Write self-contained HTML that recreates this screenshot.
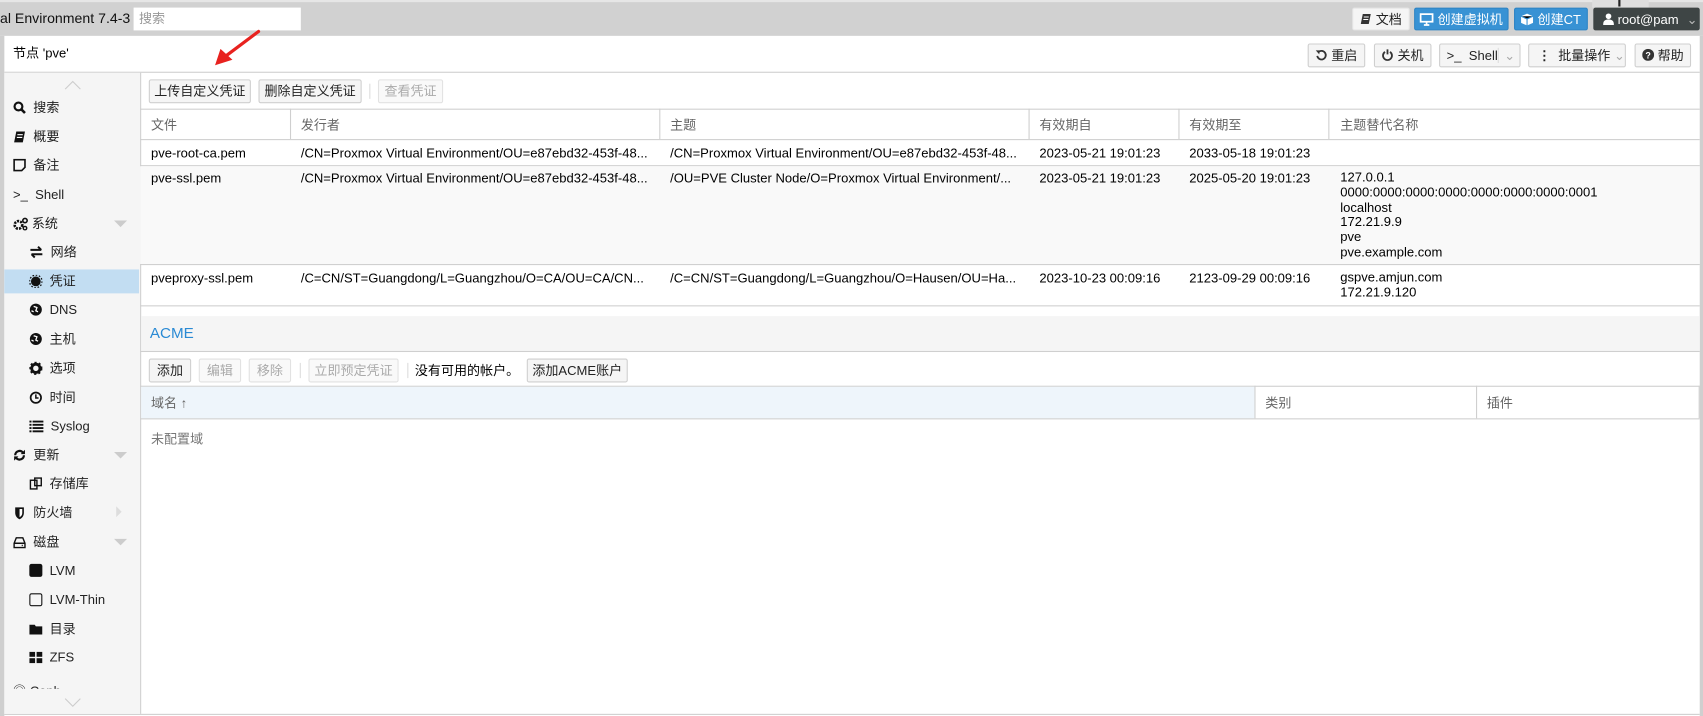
<!DOCTYPE html>
<html><head><meta charset="utf-8"><style>
*{box-sizing:border-box;margin:0;padding:0}
html,body{width:1703px;height:716px;overflow:hidden;background:#fff}
#w{position:absolute;left:0;top:0;width:1568px;height:659px;transform:scale(1.0861,1.0865);transform-origin:0 0;font-family:"Liberation Sans","Noto Sans CJK SC",sans-serif;font-size:12px;color:#000}
.a{position:absolute}
.t{position:absolute;white-space:nowrap;line-height:14px}
.btn{position:absolute;height:22px;border:1px solid #cfcfcf;border-radius:2px;background:#f5f5f5;line-height:20px;font-size:12px;color:#222;text-align:center;white-space:nowrap}
.dis{color:#aaa;border-color:#e2e2e2;background:#f9f9f9}
.hl{position:absolute;height:1px;background:#cfcfcf}
.vl{position:absolute;width:1px;background:#cfcfcf}
.hd{color:#666}
.si{position:absolute;height:16px;line-height:16px;white-space:nowrap;color:#222}
.ic{display:inline-block;width:12px;height:12px;vertical-align:-2px;background:#111;border-radius:2px}
.tri{position:absolute;width:0;height:0;border-left:6px solid transparent;border-right:6px solid transparent;border-top:6px solid #ccc}
</style></head><body><div id="w">
<!-- top bar -->
<div class="a" style="left:0;top:0;width:1568px;height:33px;background:#d1d1d1"></div>
<div class="a" style="left:0;top:0;width:1568px;height:2px;background:#e6e6e6"></div>
<div class="t" style="left:0;top:10px;font-size:13px;color:#111">al Environment 7.4-3</div>
<div class="a" style="left:123px;top:7px;width:154px;height:21px;background:#fff"></div>
<div class="t" style="left:128px;top:10px;font-size:12px;color:#999">搜索</div>
<div class="btn" style="left:1245px;top:7px;width:53px;height:21px;background:#f5f5f5;border-color:#e6e6e6">
<svg width="11" height="11" viewBox="0 0 12 12" style="vertical-align:-1px"><path d="M3 1h8l-2 10H1z" fill="#333"/><path d="M4 4h5M3.5 6.5h5" stroke="#fff"/></svg> 文档</div>
<div class="btn" style="left:1302px;top:7px;width:87px;height:21px;background:#3892d4;border-color:#2f84c4;color:#fff">
<svg width="13" height="12" viewBox="0 0 13 12" style="vertical-align:-2px"><rect x="1" y="1" width="11" height="7" fill="none" stroke="#fff" stroke-width="1.6"/><path d="M4 11h5M6.5 8v3" stroke="#fff" stroke-width="1.6"/></svg> 创建虚拟机</div>
<div class="btn" style="left:1394px;top:7px;width:68px;height:21px;background:#3892d4;border-color:#2f84c4;color:#fff">
<svg width="12" height="12" viewBox="0 0 12 12" style="vertical-align:-2px"><path d="M6 0.5L11.5 3v6L6 11.5 0.5 9V3z" fill="#fff"/><path d="M0.5 3L6 5.5 11.5 3M6 5.5v6" stroke="#3892d4"/></svg> 创建CT</div>
<div class="a" style="left:1466px;top:0;width:52px;height:7px;background:#dedede"></div>
<div class="a" style="left:1490px;top:0;width:2px;height:6px;background:#222"></div>
<div class="btn" style="left:1467px;top:7px;width:98px;height:21px;background:#3e4545;border-color:#3e4545;color:#fff;text-align:left;padding-left:8px">
<svg width="10" height="11" viewBox="0 0 10 11" style="vertical-align:-1px"><circle cx="5" cy="3" r="2.6" fill="#fff"/><path d="M0 11c0-4 2-5 5-5s5 1 5 5z" fill="#fff"/></svg> root@pam <span style="color:#bbb;margin-left:4px">&#8964;</span></div>
<!-- main panel -->
<div class="a" style="left:1565px;top:33px;width:3px;height:626px;background:#cfcfcf"></div>
<div class="a" style="left:0;top:33px;width:4px;height:626px;background:#cfcfcf"></div>
<div class="hl" style="left:4px;top:657px;width:1561px"></div>
<div class="t" style="left:12px;top:42px;font-size:12px">节点 'pve'</div>
<div class="hl" style="left:4px;top:66px;width:1561px"></div>
<div class="btn" style="left:1204px;top:40px;width:53px">
<svg width="11" height="11" viewBox="0 0 12 12" style="vertical-align:-1px"><path d="M3 3.5A4.3 4.3 0 1 1 2 7" fill="none" stroke="#333" stroke-width="1.8"/><path d="M0.5 1.5L4.5 1.5 4 5.5z" fill="#333"/></svg> 重启</div>
<div class="btn" style="left:1265px;top:40px;width:53px">
<svg width="11" height="11" viewBox="0 0 12 12" style="vertical-align:-1px"><path d="M3.5 3A4.5 4.5 0 1 0 8.5 3" fill="none" stroke="#333" stroke-width="1.8"/><path d="M6 0.5v5" stroke="#333" stroke-width="1.8"/></svg> 关机</div>
<div class="btn" style="left:1325px;top:40px;width:75px;text-align:left;padding-left:6px">&gt;_ &nbsp;Shell<span class="a" style="left:53px;top:3px;width:1px;height:14px;background:#ddd"></span><span class="a" style="left:59px;top:0;color:#aaa">&#8964;</span></div>
<div class="btn" style="left:1407px;top:40px;width:90px;text-align:left;padding-left:8px"><b style="letter-spacing:0">&#8942;</b> &nbsp;批量操作 <span style="color:#aaa">&#8964;</span></div>
<div class="btn" style="left:1505px;top:40px;width:52px">
<svg width="11" height="11" viewBox="0 0 12 12" style="vertical-align:-1px"><circle cx="6" cy="6" r="6" fill="#333"/><text x="6" y="9.5" font-size="9" font-weight="bold" fill="#fff" text-anchor="middle" font-family="Liberation Sans">?</text></svg> 帮助</div>
<!-- sidebar -->
<div class="a" style="left:4px;top:67px;width:125px;height:590px;background:#f5f5f5"></div>
<div class="vl" style="left:129px;top:67px;height:590px"></div>
<svg class="a" style="left:59px;top:74px" width="16" height="9"><path d="M1 8L8 1l7 7" fill="none" stroke="#ccc"/></svg>
<svg class="a" style="left:59px;top:642px" width="16" height="9"><path d="M1 1l7 7 7-7" fill="none" stroke="#ccc"/></svg>
<div class="a" style="left:4px;top:248px;width:124px;height:22px;background:#c2ddf2"></div>
<div class="si" style="left:12px;top:91px"><svg width="12" height="12" viewBox="0 0 12 12" style="vertical-align:-2px"><circle cx="5" cy="5" r="3.6" fill="none" stroke="#111" stroke-width="2"/><path d="M7.5 7.5l3.5 3.5" stroke="#111" stroke-width="2.4"/></svg>&nbsp; 搜索</div>
<div class="si" style="left:12px;top:118px"><svg width="12" height="12" viewBox="0 0 12 12" style="vertical-align:-2px"><path d="M3 1h8l-2 10H1z" fill="#111"/><path d="M4 4h5M3.5 6.5h5" stroke="#fff"/></svg>&nbsp; 概要</div>
<div class="si" style="left:12px;top:144px"><svg width="12" height="12" viewBox="0 0 12 12" style="vertical-align:-2px"><path d="M1 1h10v7l-3 3H1z" fill="none" stroke="#111" stroke-width="1.5"/></svg>&nbsp; 备注</div>
<div class="si" style="left:12px;top:171px">&gt;_&nbsp; Shell</div>
<div class="si" style="left:12px;top:198px"><svg width="14" height="12" viewBox="0 0 14 12" style="vertical-align:-2px"><circle cx="5" cy="7" r="3.5" fill="none" stroke="#111" stroke-width="2.4" stroke-dasharray="2 1"/><circle cx="11" cy="3" r="2" fill="none" stroke="#111" stroke-width="1.5"/><circle cx="11" cy="10" r="1.6" fill="none" stroke="#111" stroke-width="1.3"/></svg>&nbsp;系统</div>
<div class="tri" style="left:105px;top:203px"></div>
<div class="si" style="left:27px;top:224px"><svg width="13" height="12" viewBox="0 0 13 12" style="vertical-align:-2px"><path d="M1 4h10M8 1l3 3M12 8H2M5 11L2 8" stroke="#111" stroke-width="1.8" fill="none"/></svg>&nbsp; 网络</div>
<div class="si" style="left:27px;top:251px"><svg width="12" height="12" viewBox="0 0 12 12" style="vertical-align:-2px"><circle cx="6" cy="6" r="4.5" fill="#111"/><circle cx="6" cy="6" r="5.8" fill="none" stroke="#111" stroke-width="1.2" stroke-dasharray="1.5 1.5"/></svg>&nbsp; 凭证</div>
<div class="si" style="left:27px;top:277px"><svg width="12" height="12" viewBox="0 0 12 12" style="vertical-align:-2px"><circle cx="6" cy="6" r="5.5" fill="#111"/><path d="M4 3l3 1-1 3 2 1M2 7l2 1" stroke="#fff" stroke-width="1.2" fill="none"/></svg>&nbsp; DNS</div>
<div class="si" style="left:27px;top:304px"><svg width="12" height="12" viewBox="0 0 12 12" style="vertical-align:-2px"><circle cx="6" cy="6" r="5.5" fill="#111"/><path d="M4 3l3 1-1 3 2 1M2 7l2 1" stroke="#fff" stroke-width="1.2" fill="none"/></svg>&nbsp; 主机</div>
<div class="si" style="left:27px;top:331px"><svg width="12" height="12" viewBox="0 0 12 12" style="vertical-align:-2px"><circle cx="6" cy="6" r="3.8" fill="none" stroke="#111" stroke-width="2.6"/><circle cx="6" cy="6" r="5.4" fill="none" stroke="#111" stroke-width="1.6" stroke-dasharray="2 2"/></svg>&nbsp; 选项</div>
<div class="si" style="left:27px;top:358px"><svg width="12" height="12" viewBox="0 0 12 12" style="vertical-align:-2px"><circle cx="6" cy="6" r="4.8" fill="none" stroke="#111" stroke-width="1.6"/><path d="M6 3v3.3H8.5" stroke="#111" stroke-width="1.4" fill="none"/></svg>&nbsp; 时间</div>
<div class="si" style="left:27px;top:384px"><svg width="13" height="12" viewBox="0 0 13 12" style="vertical-align:-2px"><path d="M0 2h2M0 5h2M0 8h2M0 11h2M3 2h10M3 5h10M3 8h10M3 11h10" stroke="#111" stroke-width="1.8"/></svg>&nbsp; Syslog</div>
<div class="si" style="left:12px;top:411px"><svg width="12" height="12" viewBox="0 0 12 12" style="vertical-align:-2px"><path d="M2 6a4 4 0 0 1 7-2.6M10 6a4 4 0 0 1-7 2.6" fill="none" stroke="#111" stroke-width="2"/><path d="M11 1v4H7zM1 11V7h4z" fill="#111"/></svg>&nbsp; 更新</div>
<div class="tri" style="left:105px;top:416px"></div>
<div class="si" style="left:27px;top:437px"><svg width="12" height="12" viewBox="0 0 12 12" style="vertical-align:-2px"><rect x="1" y="3" width="6" height="8" fill="none" stroke="#111" stroke-width="1.3"/><rect x="5" y="1" width="6" height="7" fill="none" stroke="#111" stroke-width="1.3"/></svg>&nbsp; 存储库</div>
<div class="si" style="left:12px;top:464px"><svg width="12" height="12" viewBox="0 0 12 12" style="vertical-align:-2px"><path d="M2 1h8v5c0 3-2 5-4 6-2-1-4-3-4-6z" fill="#111"/><path d="M6 2.5h2.5v3.5c0 2-1 3-2.5 4z" fill="#fff"/></svg>&nbsp; 防火墙</div>
<div class="a" style="left:107px;top:466px;width:0;height:0;border-top:5px solid transparent;border-bottom:5px solid transparent;border-left:5px solid #ddd"></div>
<div class="si" style="left:12px;top:491px"><svg width="12" height="12" viewBox="0 0 12 12" style="vertical-align:-2px"><path d="M1 7l2-5h6l2 5v4H1z" fill="none" stroke="#111" stroke-width="1.3"/><path d="M1 7h10M8 9h1" stroke="#111" stroke-width="1.3"/></svg>&nbsp; 磁盘</div>
<div class="tri" style="left:105px;top:496px"></div>
<div class="si" style="left:27px;top:517px"><span class="ic"></span>&nbsp; LVM</div>
<div class="si" style="left:27px;top:544px"><span class="ic" style="background:none;border:1.3px solid #111"></span>&nbsp; LVM-Thin</div>
<div class="si" style="left:27px;top:571px"><svg width="12" height="12" viewBox="0 0 12 12" style="vertical-align:-2px"><path d="M0 2h5l1 1.5h6V11H0z" fill="#111"/></svg>&nbsp; 目录</div>
<div class="si" style="left:27px;top:597px"><svg width="12" height="12" viewBox="0 0 12 12" style="vertical-align:-2px"><rect x="0" y="1" width="5.3" height="4.5" fill="#111"/><rect x="6.7" y="1" width="5.3" height="4.5" fill="#111"/><rect x="0" y="6.8" width="5.3" height="4.5" fill="#111"/><rect x="6.7" y="6.8" width="5.3" height="4.5" fill="#111"/></svg>&nbsp; ZFS</div>
<div class="a" style="left:4px;top:628px;width:125px;height:6px;overflow:hidden"><div class="si" style="left:8px;top:0">◎ Ceph</div></div>
<!-- cert toolbar -->
<div class="btn" style="left:137px;top:73px;width:94px">上传自定义凭证</div>
<div class="btn" style="left:238px;top:73px;width:95px">删除自定义凭证</div>
<div class="a" style="left:340px;top:77px;width:1px;height:14px;background:#ddd"></div>
<div class="btn dis" style="left:348px;top:73px;width:60px">查看凭证</div>
<!-- grid header -->
<div class="hl" style="left:129px;top:100px;width:1436px"></div>
<div class="hl" style="left:129px;top:128px;width:1436px"></div>
<div class="vl" style="left:267px;top:100px;height:28px"></div>
<div class="vl" style="left:607px;top:100px;height:28px"></div>
<div class="vl" style="left:947px;top:100px;height:28px"></div>
<div class="vl" style="left:1085px;top:100px;height:28px"></div>
<div class="vl" style="left:1223px;top:100px;height:28px"></div>
<div class="t hd" style="left:139px;top:108px">文件</div>
<div class="t hd" style="left:277px;top:108px">发行者</div>
<div class="t hd" style="left:617px;top:108px">主题</div>
<div class="t hd" style="left:957px;top:108px">有效期自</div>
<div class="t hd" style="left:1095px;top:108px">有效期至</div>
<div class="t hd" style="left:1234px;top:108px">主题替代名称</div>
<!-- rows -->
<div class="t" style="left:139px;top:134px">pve-root-ca.pem</div>
<div class="t" style="left:277px;top:134px">/CN=Proxmox Virtual Environment/OU=e87ebd32-453f-48...</div>
<div class="t" style="left:617px;top:134px">/CN=Proxmox Virtual Environment/OU=e87ebd32-453f-48...</div>
<div class="t" style="left:957px;top:134px">2023-05-21 19:01:23</div>
<div class="t" style="left:1095px;top:134px">2033-05-18 19:01:23</div>
<div class="hl" style="left:129px;top:152px;width:1436px"></div>
<div class="a" style="left:129px;top:153px;width:1436px;height:90px;background:#f9f9f9"></div>
<div class="t" style="left:139px;top:157px">pve-ssl.pem</div>
<div class="t" style="left:277px;top:157px">/CN=Proxmox Virtual Environment/OU=e87ebd32-453f-48...</div>
<div class="t" style="left:617px;top:157px">/OU=PVE Cluster Node/O=Proxmox Virtual Environment/...</div>
<div class="t" style="left:957px;top:157px">2023-05-21 19:01:23</div>
<div class="t" style="left:1095px;top:157px">2025-05-20 19:01:23</div>
<div class="t" style="left:1234px;top:157px;line-height:13.8px">127.0.0.1<br>0000:0000:0000:0000:0000:0000:0000:0001<br>localhost<br>172.21.9.9<br>pve<br>pve.example.com</div>
<div class="hl" style="left:129px;top:243px;width:1436px"></div>
<div class="t" style="left:139px;top:249px">pveproxy-ssl.pem</div>
<div class="t" style="left:277px;top:249px">/C=CN/ST=Guangdong/L=Guangzhou/O=CA/OU=CA/CN...</div>
<div class="t" style="left:617px;top:249px">/C=CN/ST=Guangdong/L=Guangzhou/O=Hausen/OU=Ha...</div>
<div class="t" style="left:957px;top:249px">2023-10-23 00:09:16</div>
<div class="t" style="left:1095px;top:249px">2123-09-29 00:09:16</div>
<div class="t" style="left:1234px;top:249px;line-height:13.8px">gspve.amjun.com<br>172.21.9.120</div>
<div class="hl" style="left:129px;top:281px;width:1436px"></div>
<!-- ACME -->
<div class="a" style="left:130px;top:291px;width:1435px;height:32px;background:#f5f5f5"></div>
<div class="t" style="left:138px;top:298px;font-size:14px;color:#2a8ad4;line-height:16px">ACME</div>
<div class="hl" style="left:129px;top:323px;width:1436px"></div>
<div class="btn" style="left:137px;top:330px;width:39px">添加</div>
<div class="btn dis" style="left:183px;top:330px;width:39px">编辑</div>
<div class="btn dis" style="left:229px;top:330px;width:39px">移除</div>
<div class="a" style="left:276px;top:334px;width:1px;height:14px;background:#ddd"></div>
<div class="btn dis" style="left:284px;top:330px;width:83px">立即预定凭证</div>
<div class="a" style="left:375px;top:334px;width:1px;height:14px;background:#ddd"></div>
<div class="t" style="left:382px;top:334px">没有可用的帐户。</div>
<div class="btn" style="left:485px;top:330px;width:93px">添加ACME账户</div>
<div class="hl" style="left:129px;top:355px;width:1436px"></div>
<div class="a" style="left:130px;top:356px;width:1025px;height:29px;background:#eef5fb"></div>
<div class="vl" style="left:1155px;top:355px;height:30px"></div>
<div class="vl" style="left:1359px;top:355px;height:30px"></div>
<div class="vl" style="left:1564px;top:355px;height:30px"></div>
<div class="hl" style="left:129px;top:385px;width:1436px"></div>
<div class="t hd" style="left:139px;top:364px">域名 ↑</div>
<div class="t hd" style="left:1165px;top:364px">类别</div>
<div class="t hd" style="left:1369px;top:364px">插件</div>
<div class="t" style="left:139px;top:397px;color:#777">未配置域</div>
<!-- red arrow -->
<svg class="a" style="left:190px;top:24px" width="56" height="42"><path d="M48 5L16 29" stroke="#e8221f" stroke-width="3" stroke-linecap="round"/><path d="M8 36L13 21 24 31z" fill="#e8221f"/></svg>
</div></body></html>
